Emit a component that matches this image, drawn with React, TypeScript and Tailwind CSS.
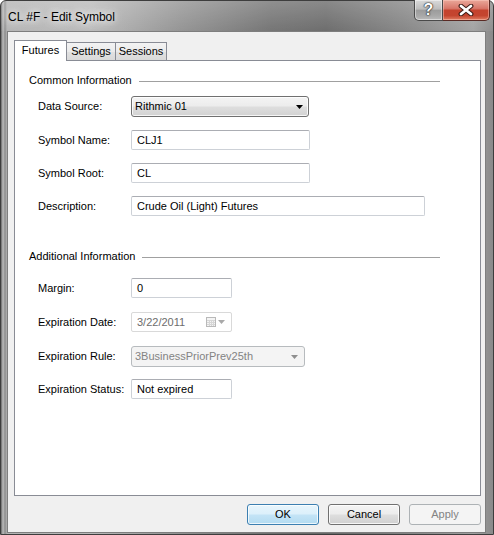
import React from 'react';

type Children = { children?: React.ReactNode };

function ComboArrow({ color }: { color: string }) {
  return (
    <svg width="7" height="4" viewBox="0 0 7 4">
      <path d="M0 0h7L3.5 4z" fill={color} />
    </svg>
  );
}

function CalendarIcon() {
  return (
    <svg width="10" height="10" viewBox="0 0 10 10">
      <rect x="0.5" y="0.5" width="9" height="9" fill="#f4f4f4" stroke="#b9b9b9" />
      <path d="M1 3.5h8M1 5.5h8M1 7.5h8M3.5 3v6M5.5 3v6M7.5 3v6" stroke="#d6d6d6" strokeWidth="1" />
    </svg>
  );
}

function GroupHeader({ title, className }: { title: string; className: string }) {
  return (
    <div className={`flex items-center pl-[14px] ${className}`}>
      <span className="text-[11px] leading-[13px] text-black">{title}</span>
      <div className="flex-1 h-px bg-[#a0a0a0] ml-[7px] mr-[40px] mt-[2px]" />
    </div>
  );
}

function Row({ label, className, children }: { label: string; className: string } & Children) {
  return (
    <div className={`flex items-center pl-[23px] ${className}`}>
      <span className="w-[93px] text-[11px] leading-[13px] text-black">{label}</span>
      {children}
    </div>
  );
}

function TextBox({ value, width }: { value: string; width: string }) {
  return (
    <div
      className={`${width} h-[20px] flex items-center pl-[5px] bg-white rounded-[2px] border border-[#cdd1d7] border-t-[#abadb3] text-[11px] text-black`}
    >
      {value}
    </div>
  );
}

function DialogButton({ label, kind }: { label: string; kind: 'default' | 'normal' | 'disabled' }) {
  const styles = {
    default:
      'border-[#3c7fb1] bg-[linear-gradient(180deg,#e8f5fc_0%,#dcf0fb_48%,#c4e4f6_52%,#b3dbf1_100%)] text-black shadow-[inset_0_0_0_1px_rgba(255,255,255,0.75)]',
    normal:
      'border-[#707070] bg-[linear-gradient(180deg,#f4f4f4_0%,#ececec_48%,#dedede_52%,#d0d0d0_100%)] text-black shadow-[inset_0_0_0_1px_rgba(255,255,255,0.8)]',
    disabled: 'border-[#adb2b5] bg-[#f4f4f4] text-[#838383]',
  }[kind];
  return (
    <div
      className={`w-[72px] h-[21px] flex items-center justify-center rounded-[3px] border text-[11px] ${styles}`}
    >
      {label}
    </div>
  );
}

export default function App() {
  return (
    <div className="w-[494px] h-[535px] overflow-hidden font-['Liberation_Sans',Arial,sans-serif]">
      <div className="w-[494px] h-[535px] flex flex-col border border-[#3d3d3d] rounded-t-[6px] bg-[linear-gradient(90deg,#666666_0px,#bdbdbd_2px,#8c8c8c_4px,#b3b3b3_6px,#b9b9b9_18%,#929292_36%,#707070_55%,#686868_66%,#838383_82%,#a0a0a0_96%,#8a8a8a_100%)]">
        {/* Title bar */}
        <div className="h-[30px] flex justify-between items-start bg-[linear-gradient(180deg,rgba(255,255,255,0.22)_0%,rgba(255,255,255,0.04)_100%)] rounded-t-[5px]">
          <span className="ml-[7px] mt-[9px] text-[12px] leading-[14px] text-black [text-shadow:0_0_6px_rgba(255,255,255,0.95),0_0_12px_rgba(255,255,255,0.85),0_0_18px_rgba(255,255,255,0.6)]">
            CL #F - Edit Symbol
          </span>
          <div className="flex mr-[3px] -mt-px">
            <div className="w-[29px] h-[21px] flex items-center justify-center rounded-bl-[5px] border border-t-0 border-[#4a4a4a] bg-[linear-gradient(180deg,#dadada_0%,#bdbdbd_45%,#9c9c9c_52%,#a9a9a9_80%,#bcbcbc_100%)] shadow-[inset_0_0_0_1px_rgba(255,255,255,0.45)]">
              <span className="text-[16px] leading-[16px] font-bold text-white [text-shadow:0_0_1px_#222,0_0_1px_#222,0_0_2px_#333]">
                ?
              </span>
            </div>
            <div className="w-[47px] h-[21px] flex items-center justify-center rounded-br-[5px] border border-t-0 border-l-0 border-[#5a2a24] bg-[linear-gradient(180deg,#eaa89a_0%,#d8776a_42%,#c4432e_52%,#c4452f_78%,#e07d62_100%)] shadow-[inset_0_0_0_1px_rgba(255,210,200,0.45)]">
              <svg width="16" height="12" viewBox="0 0 16 12">
                <path d="M3 2L13 10M13 2L3 10" stroke="#3b1a14" strokeWidth="4.8" strokeLinecap="round" />
                <path d="M3 2L13 10M13 2L3 10" stroke="#ffffff" strokeWidth="2.8" strokeLinecap="round" />
              </svg>
            </div>
          </div>
        </div>

        {/* Client area */}
        <div className="flex-1 ml-[6px] mr-[7px] mb-px bg-[#f0f0f0] border border-[#7e7e7e] flex flex-col pl-[6px] pr-[4px] pt-[8px]">
          {/* Tabs */}
          <div className="h-[20px] flex items-end">
            <div className="relative z-10 w-[53px] h-[21px] -mb-px bg-white border border-b-0 border-[#898c95] flex items-start justify-center pt-[3px] text-[11px] leading-[13px] text-black">
              Futures
            </div>
            <div className="w-[49px] h-[18px] border border-l-0 border-b-0 border-[#898c95] bg-[linear-gradient(180deg,#f3f3f3_0%,#ebebeb_50%,#e2e2e2_50%,#d9d9d9_100%)] flex items-center justify-center text-[11px] leading-[13px] text-black">
              Settings
            </div>
            <div className="w-[51px] h-[18px] border border-l-0 border-b-0 border-[#898c95] bg-[linear-gradient(180deg,#f3f3f3_0%,#ebebeb_50%,#e2e2e2_50%,#d9d9d9_100%)] flex items-center justify-center text-[11px] leading-[13px] text-black">
              Sessions
            </div>
          </div>

          {/* Tab panel */}
          <div className="h-[436px] bg-white border border-[#898c95] flex flex-col">
            <GroupHeader title="Common Information" className="mt-[13px]" />

            <Row label="Data Source:" className="mt-[9px]">
              <div className="w-[178px] h-[21px] flex items-center justify-between pl-[3px] pr-[5px] rounded-[3px] border border-[#707070] bg-[linear-gradient(180deg,#f4f4f4_0%,#ececec_48%,#dedede_52%,#d2d2d2_100%)] shadow-[inset_0_0_0_1px_rgba(255,255,255,0.8)] text-[11px] text-black">
                <span>Rithmic 01</span>
                <ComboArrow color="#000000" />
              </div>
            </Row>

            <Row label="Symbol Name:" className="mt-[13px]">
              <TextBox value="CLJ1" width="w-[179px]" />
            </Row>

            <Row label="Symbol Root:" className="mt-[13px]">
              <TextBox value="CL" width="w-[179px]" />
            </Row>

            <Row label="Description:" className="mt-[13px]">
              <TextBox value="Crude Oil (Light) Futures" width="w-[294px]" />
            </Row>

            <GroupHeader title="Additional Information" className="mt-[34px]" />

            <Row label="Margin:" className="mt-[15px]">
              <TextBox value="0" width="w-[101px]" />
            </Row>

            <Row label="Expiration Date:" className="mt-[14px]">
              <div className="w-[101px] h-[20px] flex items-center justify-between pl-[5px] pr-[6px] bg-white rounded-[2px] border border-[#d9d9d9] text-[11px] text-[#6d6d6d]">
                <span>3/22/2011</span>
                <div className="flex items-center gap-[2px]">
                  <CalendarIcon />
                  <ComboArrow color="#a9a9a9" />
                </div>
              </div>
            </Row>

            <Row label="Expiration Rule:" className="mt-[14px]">
              <div className="w-[174px] h-[21px] flex items-center justify-between pl-[3px] pr-[6px] rounded-[3px] border border-[#b7bbbe] bg-[#f4f4f4] text-[11px] text-[#838383]">
                <span>3BusinessPriorPrev25th</span>
                <ComboArrow color="#8e8e8e" />
              </div>
            </Row>

            <Row label="Expiration Status:" className="mt-[12px]">
              <TextBox value="Not expired" width="w-[101px]" />
            </Row>
          </div>

          {/* Buttons */}
          <div className="mt-[8px] flex justify-end gap-[9px]">
            <DialogButton label="OK" kind="default" />
            <DialogButton label="Cancel" kind="normal" />
            <DialogButton label="Apply" kind="disabled" />
          </div>
        </div>
      </div>
    </div>
  );
}
